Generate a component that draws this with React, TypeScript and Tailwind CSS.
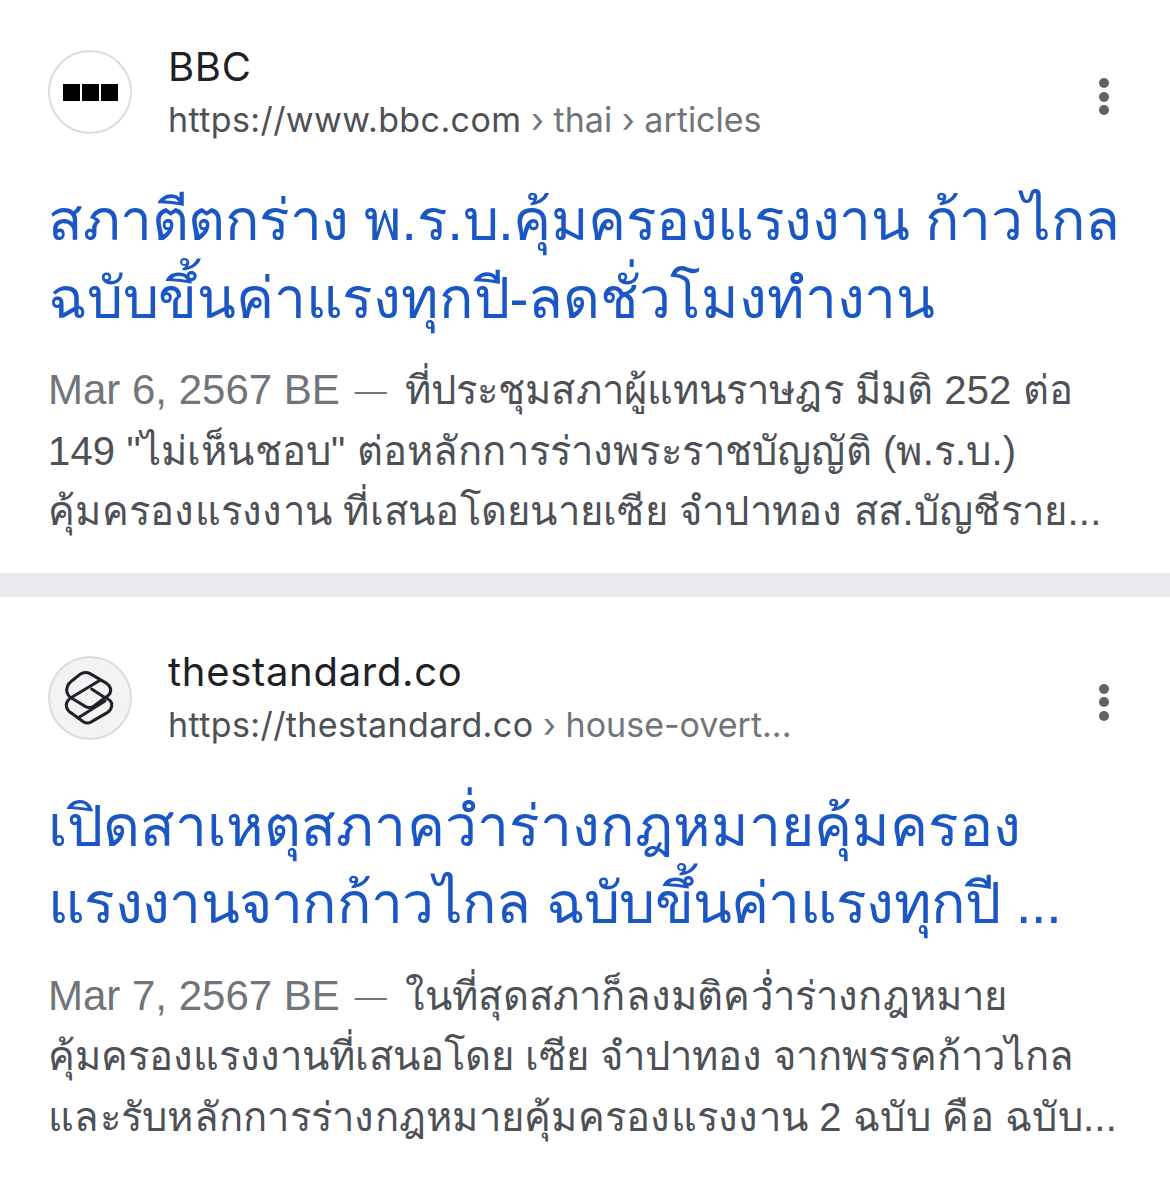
import React from 'react';

type Line = {
  text: string;
  className: string;
};

type ResultProps = {
  logo: React.ReactNode;
  logoClass: string;
  site: string;
  url: string;
  crumbs: string;
  title: Line[];
  date: string;
  snippet: Line[];
};

const BbcLogo: React.FC = () => (
  <div className="flex gap-[2px]">
    <span className="h-[17px] w-[17px] bg-black" />
    <span className="h-[17px] w-[17px] bg-black" />
    <span className="h-[17px] w-[17px] bg-black" />
  </div>
);

const StandardLogo: React.FC = () => (
  <svg width="70" height="70" viewBox="0 -6 210 210" fill="none" stroke="#202124" strokeWidth="9" strokeLinejoin="round" strokeLinecap="round">
    <path d="M75 28 Q90 18 105 26 L155 55 Q172 68 165 85 Q160 93 150 98 L118 122 Q105 132 90 124 L48 98 Q30 85 37 65 Q40 55 50 48 Z" />
    <path d="M48 98 Q30 110 35 128 Q38 138 50 145 L85 170 Q97 178 110 170 L158 142 Q172 132 170 115 Q166 104 150 98" />
    <path d="M48 98 L135 46" />
    <path d="M110 72 L150 98" />
    <path d="M70 158 L150 108" />
  </svg>
);

const Result: React.FC<ResultProps> = ({ logo, logoClass, site, url, crumbs, title, date, snippet }) => (
  <article className="px-12">
    <div className="flex h-[84px] items-center">
      <div className={`flex h-[84px] w-[84px] shrink-0 items-center justify-center rounded-full border-2 border-[#dadce0] ${logoClass}`}>
        {logo}
      </div>
      <div className="ml-[36px] flex-1 pt-[1px] font-['Inter','Noto_Sans',sans-serif]">
        <div className="text-[40px] leading-[53px] tracking-[0.7px] text-[#202124]">{site}</div>
        <div className="text-[34px] leading-[53px] tracking-[0.4px] text-[#4d5156]">
          {url}
          <span className="tracking-normal text-[#70757a]">{crumbs}</span>
        </div>
      </div>
      <div className="mr-[13px] mt-[9px] flex flex-col gap-[3.5px]">
        <span className="h-[10px] w-[10px] rounded-full bg-[#5f6368]" />
        <span className="h-[10px] w-[10px] rounded-full bg-[#5f6368]" />
        <span className="h-[10px] w-[10px] rounded-full bg-[#5f6368]" />
      </div>
    </div>
    <h2 className="mt-[48px] text-[57px] font-normal leading-[77.5px] text-[#1a56c4]">
      {title.map((line) => (
        <div key={line.text} className={`whitespace-nowrap ${line.className}`}>{line.text}</div>
      ))}
    </h2>
    <div className="mt-[23px] text-[40px] leading-[60.5px] text-[#4d5156]">
      {snippet.map((line, i) => (
        <div key={line.text} className={`whitespace-nowrap ${line.className}`}>
          {i === 0 && (
            <span className="mr-[18px] tracking-normal text-[#70757a]">
              <span className="text-[42px] leading-none">{date}</span>
              <span className="ml-[15px] align-[3px] text-[32px] leading-none font-medium">—</span>
            </span>
          )}
          {line.text}
        </div>
      ))}
    </div>
  </article>
);

export default function App() {
  return (
    <div className="h-[1178px] w-[1170px] overflow-hidden bg-white font-['Liberation_Sans','Noto_Sans','DejaVu_Sans',sans-serif]">
      <div className="pt-[50px] pb-[31px]">
        <Result
          logo={<BbcLogo />}
          logoClass="bg-white"
          site="BBC"
          url="https://www.bbc.com"
          crumbs=" › thai › articles"
          title={[
            { text: 'สภาตีตกร่าง พ.ร.บ.คุ้มครองแรงงาน ก้าวไกล', className: 'tracking-[-0.5px]' },
            { text: 'ฉบับขึ้นค่าแรงทุกปี-ลดชั่วโมงทำงาน', className: 'tracking-[-0.2px]' },
          ]}
          date="Mar 6, 2567 BE"
          snippet={[
            { text: 'ที่ประชุมสภาผู้แทนราษฎร มีมติ 252 ต่อ', className: 'tracking-[0.1px]' },
            { text: '149 "ไม่เห็นชอบ" ต่อหลักการร่างพระราชบัญญัติ (พ.ร.บ.)', className: 'tracking-[0.15px]' },
            { text: 'คุ้มครองแรงงาน ที่เสนอโดยนายเซีย จำปาทอง สส.บัญชีราย...', className: 'tracking-[0.25px]' },
          ]}
        />
      </div>
      <div className="h-6 bg-[#e8eaed]" />
      <div className="pt-[59px]">
        <Result
          logo={<StandardLogo />}
          logoClass="bg-[#f1f3f4]"
          site="thestandard.co"
          url="https://thestandard.co"
          crumbs=" › house-overt..."
          title={[
            { text: 'เปิดสาเหตุสภาคว่ำร่างกฎหมายคุ้มครอง', className: 'tracking-[0.05px]' },
            { text: 'แรงงานจากก้าวไกล ฉบับขึ้นค่าแรงทุกปี ...', className: 'tracking-[-0.7px]' },
          ]}
          date="Mar 7, 2567 BE"
          snippet={[
            { text: 'ในที่สุดสภาก็ลงมติคว่ำร่างกฎหมาย', className: 'tracking-[0.2px]' },
            { text: 'คุ้มครองแรงงานที่เสนอโดย เซีย จำปาทอง จากพรรคก้าวไกล', className: 'tracking-[0px]' },
            { text: 'และรับหลักการร่างกฎหมายคุ้มครองแรงงาน 2 ฉบับ คือ ฉบับ...', className: 'tracking-[0.25px]' },
          ]}
        />
      </div>
    </div>
  );
}
